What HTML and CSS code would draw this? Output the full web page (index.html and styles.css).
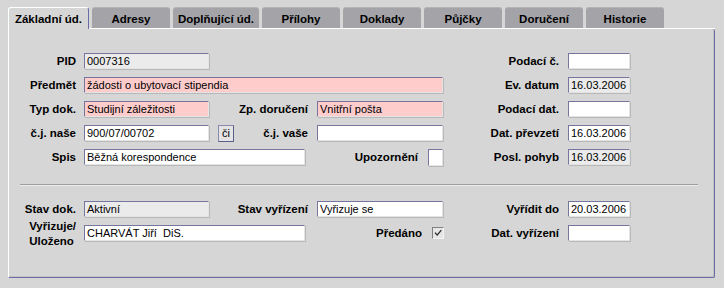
FILE: index.html
```html
<!DOCTYPE html>
<html lang="cs">
<head>
    <meta charset="UTF-8">
    <title>Dokument - Základní údaje</title>
    <link rel="stylesheet" href="styles.css">
</head>
<body>
    <div class="window">
        <div class="tabs">
            <div class="tab active">Základní úd.</div>
            <div class="tab">Adresy</div>
            <div class="tab">Doplňující úd.</div>
            <div class="tab">Přílohy</div>
            <div class="tab">Doklady</div>
            <div class="tab">Půjčky</div>
            <div class="tab">Doručení</div>
            <div class="tab">Historie</div>
        </div>

        <div class="panel">
            <div class="form-grid top">
                <!-- row 1 -->
                <div class="lbl c1">PID</div>
                <div class="field ro c2">0007316</div>
                <div class="lbl c5">Podací č.</div>
                <div class="field c6"></div>

                <!-- row 2 -->
                <div class="lbl c1">Předmět</div>
                <div class="field req span-wide">žádosti o ubytovací stipendia</div>
                <div class="lbl c5">Ev. datum</div>
                <div class="field ro c6">16.03.2006</div>

                <!-- row 3 -->
                <div class="lbl c1">Typ dok.</div>
                <div class="field req c2">Studijní záležitosti</div>
                <div class="lbl c3">Zp. doručení</div>
                <div class="field req c4">Vnitřní pošta</div>
                <div class="lbl c5">Podací dat.</div>
                <div class="field c6"></div>

                <!-- row 4 -->
                <div class="lbl c1">č.j. naše</div>
                <div class="field c2">900/07/00702</div>
                <div class="cell-split c3">
                    <button class="small-btn">či</button>
                    <span class="lbl">č.j. vaše</span>
                </div>
                <div class="field c4"></div>
                <div class="lbl c5">Dat. převzetí</div>
                <div class="field c6">16.03.2006</div>

                <!-- row 5 -->
                <div class="lbl c1">Spis</div>
                <div class="field spis">Běžná korespondence</div>
                <div class="check-cell c4">
                    <span class="lbl-plain">Upozornění</span>
                    <span class="check-box"></span>
                </div>
                <div class="lbl c5">Posl. pohyb</div>
                <div class="field ro c6">16.03.2006</div>
            </div>

            <div class="sep"></div>

            <div class="form-grid bottom">
                <div class="lbl c1">Stav dok.</div>
                <div class="field ro c2">Aktivní</div>
                <div class="lbl c3">Stav vyřízení</div>
                <div class="field c4">Vyřizuje se</div>
                <div class="lbl c5">Vyřídit do</div>
                <div class="field c6">20.03.2006</div>

                <div class="lbl two-line c1">Vyřizuje/<br>Uloženo</div>
                <div class="field spis">CHARVÁT Jiří&nbsp; DiS.</div>
                <div class="check-cell c4">
                    <span class="lbl-plain">Předáno</span>
                    <span class="tick">
                        <svg width="12" height="12" viewBox="0 0 12 12">
                            <path d="M2.5 5.5 L5 8.5 L10 2.5" fill="none" stroke="#2a2a2a" stroke-width="1.6"/>
                        </svg>
                    </span>
                </div>
                <div class="lbl c5">Dat. vyřízení</div>
                <div class="field c6"></div>
            </div>
        </div>
    </div>
</body>
</html>
```

FILE: styles.css
```css
body {
    margin: 0;
    background-color: #d6d6d6;
    font-family: 'Liberation Sans', Arial, sans-serif;
    font-size: 11px;
    color: #000;
}
.window {
    margin: 7px 0 0 8px;
    width: 707px;
}

/* tab strip */
.tabs {
    display: flex;
    gap: 3px;
    height: 21px;
    border-bottom: 1px solid #fff;
}
.tab {
    box-sizing: border-box;
    min-width: 78px;
    padding: 1px 5px 0;
    line-height: 20px;
    text-align: center;
    font-weight: bold;
    font-size: 11.5px;
    background-color: #a3a3a8;
    border-top: 1px solid #b4b4b8;
    border-radius: 3px 3px 0 0;
}
.tab.active {
    height: 22px;
    margin-bottom: -1px;
    min-width: 81px;
    padding: 1px 3px 0;
    background-color: #d6d6d6;
    border-top: 1px solid #fff;
    border-left: 1px solid #fff;
    border-right: 1px solid #6b6ba6;
}

/* panel */
.panel {
    border-left: 1px solid #fff;
    border-right: 1px solid #6b6ba6;
    border-bottom: 1px solid #6b6ba6;
    box-shadow: inset -1px -1px 0 #c2c2c2;
    border-radius: 0 2px 2px 2px;
    padding-bottom: 36px;
}
.form-grid {
    display: grid;
    grid-template-columns: 75px 125px 108px 126px 125px 62px;
    grid-auto-rows: 16px;
    row-gap: 8px;
}
.form-grid.top {
    padding-top: 24px;
}
.form-grid.bottom {
    margin-top: 15px;
}
.c1 { grid-column: 1; }
.c2 { grid-column: 2; }
.c3 { grid-column: 3; }
.c4 { grid-column: 4; }
.c5 { grid-column: 5; }
.c6 { grid-column: 6; }
.span-wide { grid-column: 2 / 5; }
.spis {
    grid-column: 2 / 4;
    width: 221px;
}

.lbl {
    text-align: right;
    padding-right: 8px;
    font-weight: bold;
    font-size: 11.5px;
    line-height: 16px;
    white-space: nowrap;
}
.c3.lbl, .c5.lbl {
    padding-right: 9px;
}
.lbl-plain {
    font-weight: bold;
    font-size: 11.5px;
    line-height: 16px;
}
.two-line {
    justify-self: end;
    align-self: start;
    text-align: left;
    line-height: 15px;
    margin-top: -6px;
}

.field {
    box-sizing: border-box;
    height: 16px;
    padding-left: 2px;
    line-height: 14px;
    background-color: #fff;
    border: 1px solid;
    border-color: #75759e #e4e4e4 #e4e4e4 #75759e;
    box-shadow: 1px 1px 0 #b8b8b8;
    white-space: nowrap;
    overflow: hidden;
}
.field.ro {
    background-color: #ebebeb;
}
.field.req {
    background-color: #ffcccc;
}

.cell-split {
    display: flex;
    justify-content: space-between;
    align-items: center;
}
.cell-split .lbl {
    padding-right: 9px;
}
.small-btn {
    box-sizing: border-box;
    width: 16px;
    height: 17px;
    margin-left: 9px;
    padding: 0;
    font-family: 'Liberation Sans', Arial, sans-serif;
    font-size: 11px;
    background-color: #e4e4e4;
    border: 1px solid;
    border-color: #8a8ab0 #5e5e8a #5e5e8a #8a8ab0;
}

.check-cell {
    display: flex;
    justify-content: flex-end;
    align-items: center;
    gap: 10px;
}
.check-box {
    box-sizing: border-box;
    width: 15px;
    height: 17px;
    background-color: #fff;
    border: 1px solid;
    border-color: #75759e #e4e4e4 #e4e4e4 #75759e;
    box-shadow: 1px 1px 0 #b8b8b8;
}
.tick {
    box-sizing: border-box;
    display: flex;
    width: 12px;
    height: 12px;
    margin-right: -1px;
    background-color: #e6e6e6;
    border: 1px solid;
    border-color: #808080 #f4f4f4 #f4f4f4 #808080;
}
.tick svg {
    width: 10px;
    height: 10px;
}

.sep {
    margin: 19px 16px 0 11px;
    border-top: 1px solid #9e9e9e;
    border-bottom: 1px solid #ececec;
}
```
